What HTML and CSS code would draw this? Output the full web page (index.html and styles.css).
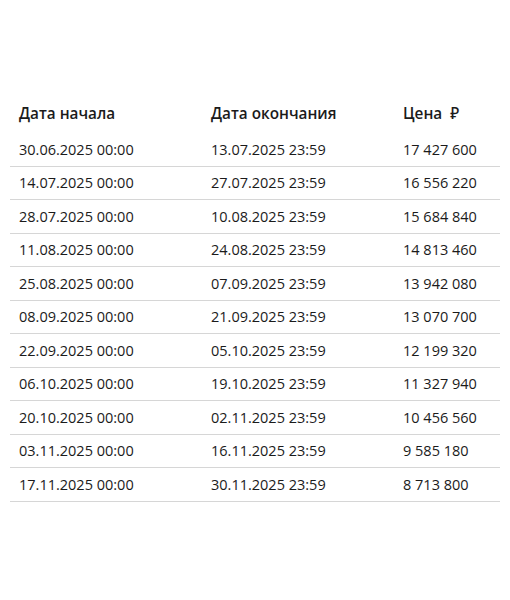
FILE: index.html
```html
<!DOCTYPE html>
<html lang="ru">
<head>
<meta charset="utf-8">
<link rel="stylesheet" href="styles.css">
</head>
<body>
<div class="wrap">
  <div class="table">
    <div class="row head">
      <div class="cell">Дата начала</div>
      <div class="cell">Дата окончания</div>
      <div class="cell">Цена <span class="rub">₽</span></div>
    </div>
    <div class="row"><div class="cell">30.06.2025 00:00</div><div class="cell">13.07.2025 23:59</div><div class="cell">17 427 600</div></div>
    <div class="row"><div class="cell">14.07.2025 00:00</div><div class="cell">27.07.2025 23:59</div><div class="cell">16 556 220</div></div>
    <div class="row"><div class="cell">28.07.2025 00:00</div><div class="cell">10.08.2025 23:59</div><div class="cell">15 684 840</div></div>
    <div class="row"><div class="cell">11.08.2025 00:00</div><div class="cell">24.08.2025 23:59</div><div class="cell">14 813 460</div></div>
    <div class="row"><div class="cell">25.08.2025 00:00</div><div class="cell">07.09.2025 23:59</div><div class="cell">13 942 080</div></div>
    <div class="row"><div class="cell">08.09.2025 00:00</div><div class="cell">21.09.2025 23:59</div><div class="cell">13 070 700</div></div>
    <div class="row"><div class="cell">22.09.2025 00:00</div><div class="cell">05.10.2025 23:59</div><div class="cell">12 199 320</div></div>
    <div class="row"><div class="cell">06.10.2025 00:00</div><div class="cell">19.10.2025 23:59</div><div class="cell">11 327 940</div></div>
    <div class="row"><div class="cell">20.10.2025 00:00</div><div class="cell">02.11.2025 23:59</div><div class="cell">10 456 560</div></div>
    <div class="row"><div class="cell">03.11.2025 00:00</div><div class="cell">16.11.2025 23:59</div><div class="cell">9 585 180</div></div>
    <div class="row"><div class="cell">17.11.2025 00:00</div><div class="cell">30.11.2025 23:59</div><div class="cell">8 713 800</div></div>
  </div>
</div>
</body>
</html>
```
FILE: styles.css
```css
html, body {
  margin: 0;
  padding: 0;
  background: #ffffff;
}
.wrap {
  padding: 96px 10px 0 10px;
  font-family: "Open Sans", "Noto Sans", sans-serif;
  font-size: 14.5px;
  color: #1b1b1b;
}
.table {
  display: flex;
  flex-direction: column;
}
.row {
  display: grid;
  grid-template-columns: 192px 192px 1fr;
  height: 33.5px;
  box-sizing: border-box;
  border-bottom: 1px solid #d6d6d6;
  align-items: center;
}
.row.head {
  height: 37px;
  border-bottom: none;
  font-weight: 600;
  font-size: 15.3px;
  align-items: start;
  padding-top: 7px;
}
.cell {
  padding-left: 9px;
  white-space: nowrap;
}
.rub {
  margin-left: 4px;
  font-weight: 500;
}
```
